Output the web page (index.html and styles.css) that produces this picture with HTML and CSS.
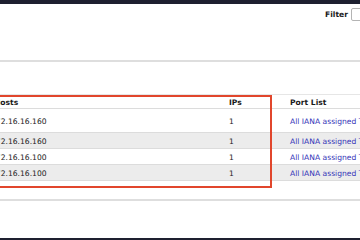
FILE: index.html
```html
<!DOCTYPE html>
<html>
<head>
<meta charset="utf-8">
<link rel="stylesheet" href="styles.css">
</head>
<body>
<div class="page">
  <div class="topbar"></div>
  <div class="toolbar">
    <label class="filter-label" for="filter">Filter</label>
    <input class="filter-input" id="filter" type="text">
  </div>
  <div class="rule"></div>
  <div class="content">
    <table class="grid">
      <thead>
        <tr>
          <th class="col-hosts">Hosts</th>
          <th class="col-ips">IPs</th>
          <th class="col-ports">Port List</th>
        </tr>
      </thead>
      <tbody>
        <tr class="tall">
          <td class="host">172.16.16.160</td>
          <td>1</td>
          <td><a href="#">All IANA assigned TCP and UDP</a></td>
        </tr>
        <tr class="alt">
          <td class="host">172.16.16.160</td>
          <td>1</td>
          <td><a href="#">All IANA assigned TCP and UDP</a></td>
        </tr>
        <tr>
          <td class="host">172.16.16.100</td>
          <td>1</td>
          <td><a href="#">All IANA assigned TCP and UDP</a></td>
        </tr>
        <tr class="alt">
          <td class="host">172.16.16.100</td>
          <td>1</td>
          <td><a href="#">All IANA assigned TCP and UDP</a></td>
        </tr>
      </tbody>
    </table>
    <div class="highlight"></div>
  </div>
  <div class="rule rule-bottom"></div>
  <div class="bottombar"></div>
</div>
</body>
</html>
```
FILE: styles.css
```css
html, body {
  margin: 0;
  padding: 0;
  overflow: hidden;
  background: #ffffff;
}
body {
  width: 360px;
  height: 240px;
  font-family: "DejaVu Sans", Verdana, sans-serif;
  font-size: 7.6px;
  color: #222222;
}
.page {
  width: 440px;
  height: 240px;
  margin-left: -10px;
  display: flex;
  flex-direction: column;
}
.topbar {
  height: 4px;
  background: #1e2030;
  flex: none;
}
.toolbar {
  height: 56px;
  box-sizing: border-box;
  padding-top: 4px;
  display: flex;
  justify-content: flex-end;
  align-items: flex-start;
  gap: 3px;
  flex: none;
}
.filter-label {
  font-weight: bold;
  line-height: 14px;
  color: #1a1a1a;
}
.filter-input {
  width: 79px;
  height: 13px;
  box-sizing: border-box;
  margin: 0;
  padding: 0;
  border: 1px solid #b4b4b4;
  border-radius: 2px;
  background: #fff;
}
.rule {
  height: 2px;
  background: #dedede;
  flex: none;
}
.content {
  position: relative;
  padding-top: 32px;
  flex: none;
}
.grid {
  width: 440px;
  table-layout: fixed;
  border-collapse: collapse;
  border-top: 1px solid #e6e6e6;
}
.grid th, .grid td {
  box-sizing: border-box;
  padding: 0 4px;
  text-align: left;
  vertical-align: middle;
  white-space: nowrap;
  overflow: hidden;
  border-bottom: 1px solid #dcdcdc;
}
.grid th {
  height: 14px;
  padding-top: 2px;
  font-weight: bold;
  color: #1a1a1a;
}
.grid td {
  height: 16px;
  padding-top: 1px;
}
.grid tr.tall td {
  height: 24px;
}
.grid tr.alt td {
  background: #ececec;
}
.grid td.host {
  padding-left: 1px;
}
.col-hosts { width: 235px; }
.col-ips { width: 61px; }
.col-ports { width: 144px; }
.grid a {
  color: #3434b8;
  text-decoration: none;
}
.highlight {
  position: absolute;
  left: 0;
  top: 33px;
  width: 282px;
  height: 93px;
  box-sizing: border-box;
  border: 2px solid #e1462c;
  pointer-events: none;
}
.rule-bottom {
  margin-top: 18px;
}
.bottombar {
  margin-top: auto;
  height: 2px;
  background: #1e2030;
  flex: none;
}
```
